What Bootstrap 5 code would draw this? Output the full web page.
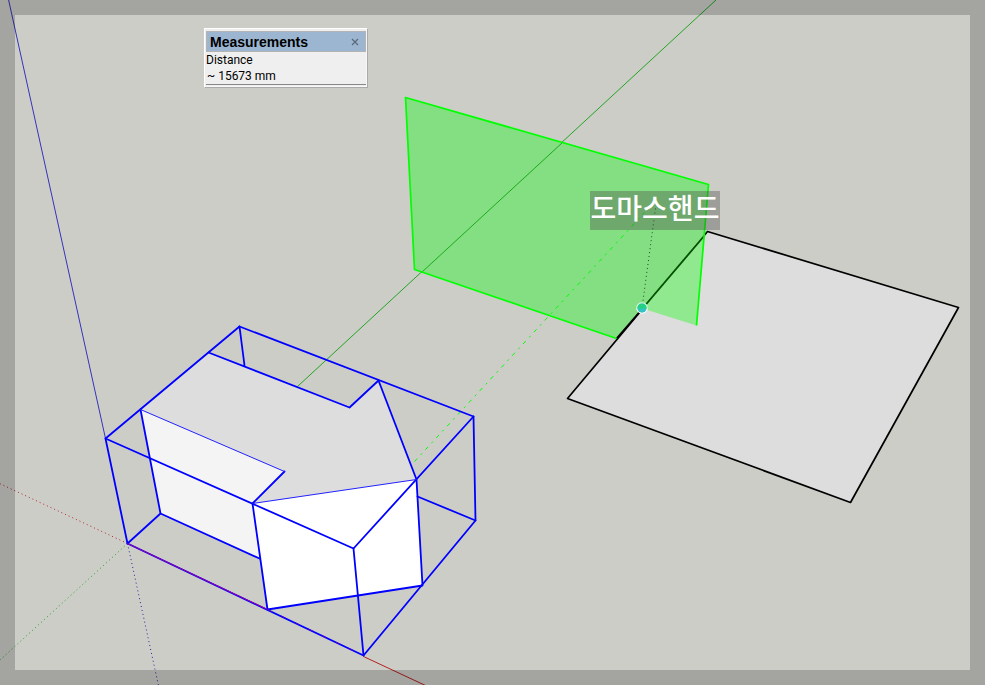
<!DOCTYPE html>
<html lang="ko">
<head>
<meta charset="utf-8">
<meta name="viewport" content="width=device-width, initial-scale=1">
<title>Measurements</title>
<link href="https://cdn.jsdelivr.net/npm/bootstrap@5.3.0/dist/css/bootstrap.min.css" rel="stylesheet">
<style>
  body { background: #cdcdc8; font-family: "Liberation Sans", Arial, sans-serif; color: #000; }
  .model-edge { fill: none; stroke: #00f; stroke-width: 1.8; stroke-linejoin: round; stroke-linecap: round; }
  .soft-edge { fill: none; stroke: #22f; stroke-width: 1; }
  .view-frame { border: 15px solid rgba(0, 0, 0, .2); }
  .measure-panel { top: 28px; left: 204px; width: 164px; padding: 2px 1px; background: #efefef; border: 1px solid #fff; border-right-color: #aaa; border-bottom-color: #aaa; box-shadow: inset -1px -1px #f8f8f8; }
  .measure-title { height: 21px; padding: 0 6px 0 3px; background: #9cb6d1; border: 1px solid #b4b4b4; }
  .measure-title h1 { font-size: 14px; line-height: 20px; }
  .measure-close { width: 8px; height: 18px; color: #5a6a7c; }
  .measure-body { font-family: Roboto, sans-serif; font-size: 12px; line-height: 16px; }
  .measure-value { height: 17px; padding: 0 1px; background: #efefef; border-bottom: 1px solid #888 !important; color: #000; }
  .name-tag { left: 590px; top: 191px; width: 130px; height: 39px; background: rgba(70, 70, 70, .35); color: #fff; font-family: "Noto Sans CJK KR", sans-serif; font-size: 28px; line-height: 32px; }
</style>
<script src="https://cdn.jsdelivr.net/npm/bootstrap@5.3.0/dist/js/bootstrap.bundle.min.js"></script>
</head>
<body>
<main class="position-relative vh-100 overflow-hidden">
  <svg class="d-block w-100 h-100" viewBox="0 0 985 685" preserveAspectRatio="xMinYMin slice" role="img" aria-label="3D model">
   <g transform="translate(.5 .5)">
    <!-- drawing axes -->
    <g fill="none" stroke-width="1">
      <path d="M8 -1L105 438" stroke="#3434bb"/>
      <path d="M716 -1L297 386" stroke="#22a422"/>
      <path d="M363 656L425 685" stroke="#b22020"/>
      <path d="M127 543L-1 483" stroke="#b02828" stroke-dasharray="1 3"/>
      <path d="M127 543L-1 660" stroke="#20a020" stroke-dasharray="1 3"/>
      <path d="M127 543L158 685" stroke="#2222aa" stroke-dasharray="1 3"/>
    </g>

    <!-- flat face on the right -->
    <path d="M707 231L958 307L850 502L567 398Z" fill="#ddd" stroke="#000" stroke-width="1.700" stroke-linejoin="round"/>

    <!-- green section plane -->
    <path d="M405 97L708 184L704 235L616 338L414 269Z" fill="#84de82"/>
    <path d="M704 235L696 325L642 308Z" fill="#90e88f"/>
    <path d="M704 235L642 308" stroke="#005000" stroke-width="1.800"/>
    <path d="M642 308L616 338" stroke="#000" stroke-width="1.700"/>
    <path d="M562 142L421 272" stroke="#00a000" stroke-width="1" opacity=".8"/>
    <path d="M616 338L414 269L405 97L708 184L696 325" fill="none" stroke="#0f0" stroke-width="1.700" stroke-linejoin="round"/>
    <path d="M414 461L644 212" fill="none" stroke="#0f0" stroke-width="1" stroke-dasharray="4 5 2 5"/>
    <path d="M655 208L642 304" fill="none" stroke="#244a24" stroke-width="1" stroke-dasharray="1 3"/>

    <!-- building faces -->
    <path d="M208 352L349 407L378 380L416 479L252 503L284 471L140 409Z" fill="#ddd"/>
    <path d="M140 409L284 471L252 503L259 558L160 513Z" fill="#f4f4f4"/>
    <path d="M252 503L416 479L422 585L267 609Z" fill="#fff"/>

    <!-- building edges and bounding box -->
    <g class="model-edge">
      <path d="M105 438L239 326L473 416L353 548Z"/>
      <path d="M105 438L127 543L363 655L475 520L473 416"/>
      <path d="M353 548L363 655"/>
      <path d="M239 326L244 365M208 352L349 407L378 380L416 479L422 585L267 609L252 503L284 471"/>
      <path d="M140 409L160 513L127 543M160 513L259 558M417 496L475 520"/>
    </g>
    <path class="soft-edge" d="M140 409L284 471M252 503L416 479"/>
    <path d="M127 543L267 609" stroke="#a000a0" stroke-width="1"/>
    <path d="M267 609L363 655" stroke="#5500cc" stroke-width="1" stroke-dasharray="5 10"/>
   </g>

    <!-- inference point -->
    <g>
      <circle cx="642" cy="308" r="5.800" fill="#fff"/>
      <circle cx="642" cy="308" r="4.700" fill="#34c2c2"/>
      <path d="M637.300 308.500A4.700 4.700 0 0 1 646.700 308.500Z" fill="#24d180"/>
      <path d="M636.500 308A5.500 5.500 0 0 1 647.500 308" fill="none" stroke="#a8f0b0" stroke-width="1"/>
    </g>
  </svg>

  <div class="view-frame position-absolute top-0 start-0 w-100 h-100 pe-none"></div>

  <section class="measure-panel position-absolute" aria-labelledby="measureTitle">
    <header class="measure-title d-flex align-items-center justify-content-between">
      <h1 id="measureTitle" class="fw-bold m-0">Measurements</h1>
      <button type="button" class="measure-close d-flex align-items-center border-0 bg-transparent p-0" aria-label="Close">
        <svg width="8" height="8" viewBox="0 0 8 8" aria-hidden="true"><path d="M1 1L7 7M7 1L1 7" stroke="currentColor" stroke-width="1.300"/></svg>
      </button>
    </header>
    <div class="measure-body">
      <label for="distance" class="d-block">Distance</label>
      <input id="distance" class="measure-value d-block w-100 border-0" type="text" value="~ 15673 mm">
    </div>
  </section>

  <div class="name-tag position-absolute text-center text-nowrap fw-medium">도마스핸드</div>
</main>
</body>
</html>
